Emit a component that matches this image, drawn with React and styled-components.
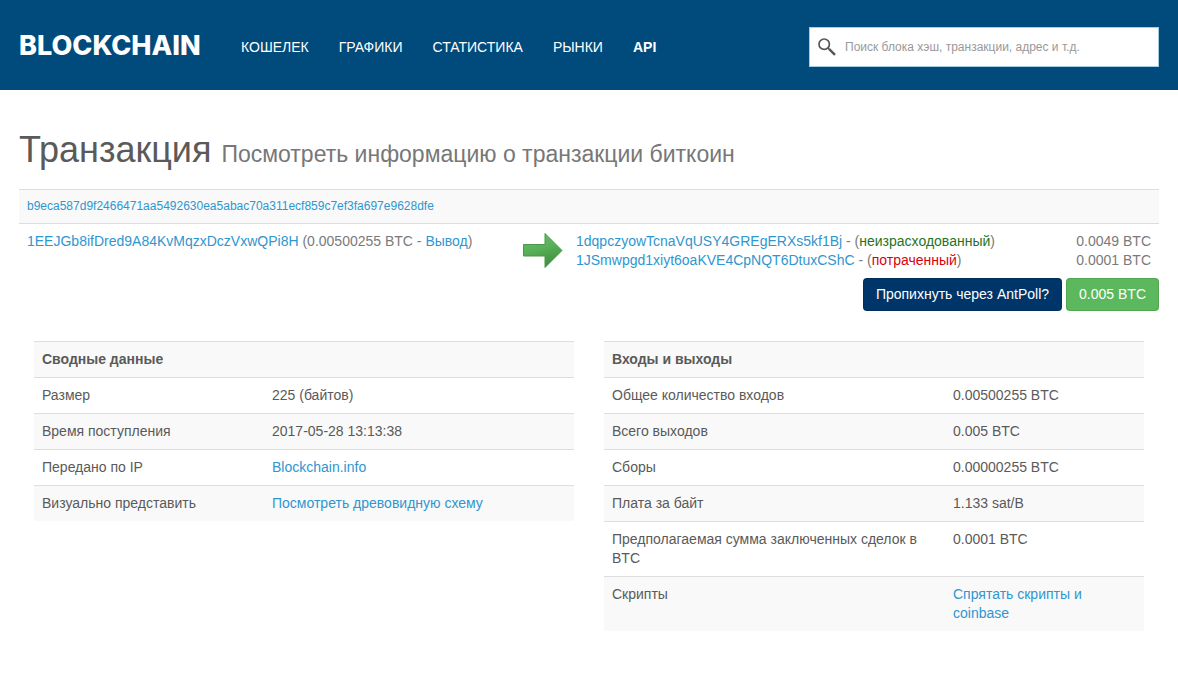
import React, { useState } from 'react'
import styled, { createGlobalStyle } from 'styled-components'

const navItems = [
    { label: 'КОШЕЛЕК' },
    { label: 'ГРАФИКИ' },
    { label: 'СТАТИСТИКА' },
    { label: 'РЫНКИ' },
    { label: 'API', bold: true },
]

const outputs = [
    { address: '1dqpczyowTcnaVqUSY4GREgERXs5kf1Bj', status: 'неизрасходованный', spent: false, amount: '0.0049 BTC' },
    { address: '1JSmwpgd1xiyt6oaKVE4CpNQT6DtuxCShC', status: 'потраченный', spent: true, amount: '0.0001 BTC' },
]

const summary = [
    { label: 'Размер', value: '225 (байтов)' },
    { label: 'Время поступления', value: '2017-05-28 13:13:38' },
    { label: 'Передано по IP', value: 'Blockchain.info', link: true },
    { label: 'Визуально представить', value: 'Посмотреть древовидную схему', link: true },
]

const totals = [
    { label: 'Общее количество входов', value: '0.00500255 BTC' },
    { label: 'Всего выходов', value: '0.005 BTC' },
    { label: 'Сборы', value: '0.00000255 BTC' },
    { label: 'Плата за байт', value: '1.133 sat/B' },
    { label: 'Предполагаемая сумма заключенных сделок в BTC', value: '0.0001 BTC' },
    { label: 'Скрипты', value: 'Спрятать скрипты и coinbase', link: true },
]

function Search() {
    const [query, setQuery] = useState('')

    return (
        <SearchBox>
            <svg width="18" height="18" viewBox="0 0 18 18" fill="none" stroke="#555" aria-hidden="true">
                <circle cx="6.2" cy="6.2" r="5.2" strokeWidth="1.7" />
                <path d="M10 10l2 2" strokeWidth="1.7" />
                <path d="M11.2 11.2l5.8 5.6" strokeWidth="2.4" />
            </svg>
            <input
                type="text"
                aria-label="Поиск"
                placeholder="Поиск блока хэш, транзакции, адрес и т.д."
                value={query}
                onChange={(e) => setQuery(e.target.value)}
            />
        </SearchBox>
    )
}

function Arrow() {
    return (
        <svg width="40" height="36" viewBox="0 0 40 36" aria-hidden="true">
            <defs>
                <linearGradient id="arrowFill" x1="0" y1="0" x2="0.3" y2="1">
                    <stop offset="0" stopColor="#6cc06c" />
                    <stop offset="0.5" stopColor="#58b158" />
                    <stop offset="1" stopColor="#429142" />
                </linearGradient>
            </defs>
            <path d="M0.5 12.5h21.500v-11l17 17-17 17v-11.500h-21.500z" fill="url(#arrowFill)" stroke="#4b964b" strokeWidth="1" />
        </svg>
    )
}

function InfoTable({ title, rows, labelWidth }) {
    return (
        <Info $labelWidth={labelWidth}>
            <thead>
                <tr>
                    <th colSpan="2">{title}</th>
                </tr>
            </thead>
            <tbody>
                {rows.map((row) => (
                    <tr key={row.label}>
                        <td>{row.label}</td>
                        <td>{row.link ? <Link href="#">{row.value}</Link> : row.value}</td>
                    </tr>
                ))}
            </tbody>
        </Info>
    )
}

export default function App() {
    return (
        <>
            <GlobalStyle />
            <Header>
                <Logo href="#">BLOCKCHAIN</Logo>
                <Nav>
                    {navItems.map((item) => (
                        <NavLink href="#" key={item.label} $bold={item.bold}>{item.label}</NavLink>
                    ))}
                </Nav>
                <Search />
            </Header>
            <Content>
                <Title>Транзакция <small>Посмотреть информацию о транзакции биткоин</small></Title>
                <TxTable>
                    <colgroup>
                        <col className="from" />
                        <col className="arrow" />
                        <col />
                        <col className="amount" />
                    </colgroup>
                    <thead>
                        <tr>
                            <th colSpan="4"><Link href="#">b9eca587d9f2466471aa5492630ea5abac70a311ecf859c7ef3fa697e9628dfe</Link></th>
                        </tr>
                    </thead>
                    <tbody>
                        <tr>
                            <td>
                                <Link href="#">1EEJGb8ifDred9A84KvMqzxDczVxwQPi8H</Link> (0.00500255 BTC - <Link href="#">Вывод</Link>)
                            </td>
                            <td><Arrow /></td>
                            <td>
                                {outputs.map((out) => (
                                    <div key={out.address}>
                                        <Link href="#">{out.address}</Link> - (<Status $spent={out.spent}>{out.status}</Status>)
                                    </div>
                                ))}
                            </td>
                            <td className="right">
                                {outputs.map((out) => <div key={out.address}>{out.amount}</div>)}
                            </td>
                        </tr>
                    </tbody>
                </TxTable>
                <Actions>
                    <Button $color="#003569">Пропихнуть через AntPoll?</Button>
                    <Button $color="#5cb85c">0.005 BTC</Button>
                </Actions>
                <Columns>
                    <InfoTable title="Сводные данные" rows={summary} labelWidth="230px" />
                    <InfoTable title="Входы и выходы" rows={totals} labelWidth="341px" />
                </Columns>
            </Content>
        </>
    )
}

const GlobalStyle = createGlobalStyle`
    * {
        box-sizing: border-box;
    }
    body {
        margin: 0;
        background-color: #fff;
        color: #5a5a5a;
        font-family: "Liberation Sans", Arial, sans-serif;
        font-size: 14px;
        line-height: 19px;
    }
`

const Header = styled.header`
    display: flex;
    align-items: center;
    height: 90px;
    padding: 4px 19px 0;
    background-color: #004a7c;
`

const Logo = styled.a`
    width: 182px;
    margin-right: 40px;
    padding-bottom: 2px;
    color: #fff;
    font-family: Inter, sans-serif;
    font-size: 27px;
    font-weight: 800;
    line-height: 32px;
    text-decoration: none;
`

const Nav = styled.nav`
    display: flex;
    gap: 30px;
    margin-right: auto;
`

const NavLink = styled.a`
    color: #fff;
    font-weight: ${({ $bold }) => $bold ? 700 : 400};
    text-decoration: none;
`

const SearchBox = styled.div`
    display: flex;
    align-items: center;
    width: 350px;
    height: 40px;
    padding: 0 8px;
    background-color: #fff;
    border: 1px solid #a5cbe5;
    input {
        flex: 1;
        min-width: 0;
        padding: 0;
        margin-left: 9px;
        border: none;
        outline: none;
        background: none;
        color: #5a5a5a;
        font-family: inherit;
        font-size: 12px;
        &::placeholder {
            color: #999;
            opacity: 1;
        }
    }
`

const Content = styled.main`
    padding: 40px 19px;
`

const Title = styled.h1`
    margin: 0 0 19px;
    font-size: 36px;
    font-weight: 400;
    line-height: 40px;
    small {
        color: #777;
        font-size: 23px;
        line-height: 1;
    }
`

const Link = styled.a`
    color: #2f96cf;
    text-decoration: none;
    &:hover {
        text-decoration: underline;
    }
`

const TxTable = styled.table`
    width: 100%;
    border-collapse: separate;
    border-spacing: 0;
    table-layout: fixed;
    color: #7a7a7a;
    .from {
        width: 496px;
    }
    .arrow {
        width: 53px;
    }
    .amount {
        width: 100px;
    }
    th, td {
        padding: 8px;
        border-top: 1px solid #ddd;
        text-align: left;
        vertical-align: top;
        white-space: nowrap;
    }
    th {
        background-color: #f9f9f9;
        font-size: 12px;
        font-weight: 400;
        line-height: 17px;
    }
    .right {
        text-align: right;
    }
    svg {
        display: block;
    }
`

const Status = styled.span`
    color: ${({ $spent }) => $spent ? '#d9000f' : '#1f741f'};
`

const Actions = styled.div`
    display: flex;
    justify-content: flex-end;
    gap: 4px;
    margin-bottom: 30px;
`

const Button = styled.button`
    padding: 6px 12px;
    border: 1px solid rgba(0, 0, 0, 0.1);
    border-radius: 4px;
    background-color: ${({ $color }) => $color};
    color: #fff;
    font-family: inherit;
    font-size: 14px;
    line-height: 19px;
    cursor: pointer;
`

const Columns = styled.div`
    display: grid;
    grid-template-columns: 1fr 1fr;
    align-items: start;
    gap: 30px;
    padding: 0 15px;
`

const Info = styled.table`
    width: 100%;
    border-collapse: separate;
    border-spacing: 0;
    th, td {
        padding: 8px;
        border-top: 1px solid #ddd;
        text-align: left;
        vertical-align: top;
    }
    td:first-child {
        width: ${({ $labelWidth }) => $labelWidth};
    }
    thead tr, tbody tr:nth-child(even) {
        background-color: #f9f9f9;
    }
`
